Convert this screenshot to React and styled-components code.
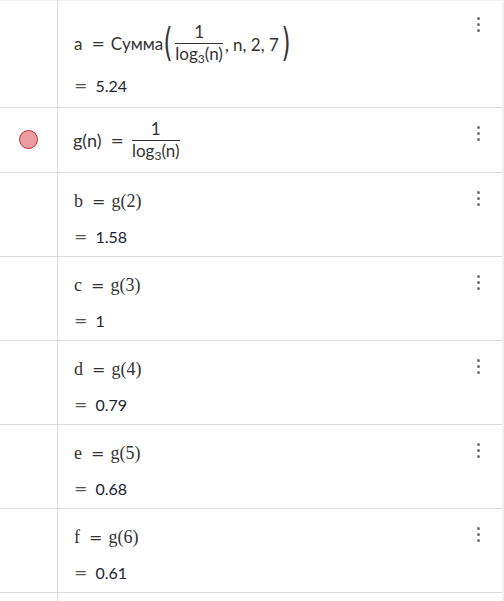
import React from "react";
import styled, { createGlobalStyle } from "styled-components";

const Global = createGlobalStyle`
  body {
    margin: 0;
    background: #fff;
    font-family: "Lato", "Noto Sans", sans-serif;
    color: #333;
  }
`;

const Panel = styled.div`
  width: 502px;
  min-height: 601px;
  border-right: 2px solid #f1f1f1;
  box-shadow: inset 0 1px 1px rgba(0, 0, 0, 0.06);
  overflow: hidden;
`;

const Row = styled.div`
  display: grid;
  grid-template-columns: 57px 1fr;
  height: ${(p) => p.h}px;
  border-bottom: 1px solid #dcdcdc;
`;

const Marker = styled.div`
  display: flex;
  align-items: center;
  justify-content: center;
`;

const Dot = styled.span`
  width: 19px;
  height: 19px;
  border-radius: 50%;
  background: #eb9c9e;
  border: 1px solid #d0252b;
  box-sizing: border-box;
  margin-top: -1px;
`;

const Content = styled.div`
  position: relative;
  border-left: 1px solid #dcdcdc;
  padding: ${(p) => p.pad || "0 0 0 16px"};
  display: flex;
  flex-direction: column;
  justify-content: ${(p) => (p.center ? "center" : "flex-start")};
  gap: ${(p) => p.gap || 0}px;
`;

const Line = styled.div`
  display: flex;
  align-items: center;
  height: ${(p) => p.h || 20}px;
  font-family: ${(p) =>
    p.serif ? '"Liberation Serif", "Times New Roman", serif' : '"Lato", "Noto Sans", sans-serif'};
  font-size: ${(p) => p.size || 18}px;
  color: #333;
  white-space: nowrap;
`;

const Eq = styled.span`
  margin: 0 6px 0 9px;
  font-family: "DejaVu Sans", sans-serif;
  font-size: 16px;
  color: ${(p) => (p.muted ? "#555" : "#333")};
`;

const OutEq = styled(Eq)`
  margin: 0 8px 0 0;
`;

const Value = styled.span`
  font-family: "Lato", sans-serif;
  font-size: 16px;
  color: #1d2233;
`;

const Frac = styled.span`
  display: inline-flex;
  flex-direction: column;
  align-items: center;
  margin: 0 2px;
  font-size: 17px;
  line-height: 18px;
`;

const Bar = styled.span`
  align-self: stretch;
  height: 1px;
  background: #333;
  margin: 2px 0 1px;
`;

const Sub = styled.sub`
  font-size: 12px;
  vertical-align: -3px;
  line-height: 0;
`;

const Paren = styled.span`
  display: inline-block;
  font-family: "DejaVu Sans", sans-serif;
  font-size: 21px;
  transform: scale(1.1, 1.9);
  margin: 0 ${(p) => (p.close ? 0 : 1)}px 0 ${(p) => (p.close ? 3 : 1)}px;
  color: #333;
`;

const Args = styled.span`
  margin-top: 3px;
`;

const Menu = styled.div`
  position: absolute;
  top: ${(p) => p.top || 18}px;
  right: 22px;
  display: flex;
  flex-direction: column;
  gap: 3px;
`;

const MenuDot = styled.span`
  width: 3px;
  height: 3px;
  border-radius: 50%;
  background: #6f6f6f;
`;

const Kebab = ({ top }) => (
  <Menu top={top}>
    <MenuDot />
    <MenuDot />
    <MenuDot />
  </Menu>
);

const LogFrac = () => (
  <Frac>
    <span>1</span>
    <Bar />
    <span>
      log<Sub>3</Sub>(n)
    </span>
  </Frac>
);

const values = [
  ["b", "2", "1.58"],
  ["c", "3", "1"],
  ["d", "4", "0.79"],
  ["e", "5", "0.68"],
  ["f", "6", "0.61"],
];

export default function App() {
  return (
    <>
      <Global />
      <Panel>
        <Row h={107}>
          <Marker />
          <Content pad="22px 0 0 16px" gap={11}>
            <Line h={42} size={17}>
              <span>a</span>
              <Eq>=</Eq>
              <span>Сумма</span>
              <Paren>(</Paren>
              <LogFrac />
              <Args>, n, 2, 7</Args>
              <Paren close>)</Paren>
            </Line>
            <Line>
              <OutEq muted>=</OutEq>
              <Value>5.24</Value>
            </Line>
            <Kebab top={17} />
          </Content>
        </Row>
        <Row h={64}>
          <Marker>
            <Dot />
          </Marker>
          <Content pad="0 0 0 15px" center>
            <Line h={42}>
              <span>g(n)</span>
              <Eq>=</Eq>
              <LogFrac />
            </Line>
            <Kebab top={18} />
          </Content>
        </Row>
        {values.map(([name, arg, val]) => (
          <Row h={83} key={name}>
            <Marker />
            <Content pad="18px 0 0 16px" gap={15}>
              <Line serif>
                <span>{name}</span>
                <Eq>=</Eq>
                <span>g({arg})</span>
              </Line>
              <Line>
                <OutEq muted>=</OutEq>
                <Value>{val}</Value>
              </Line>
              <Kebab top={18} />
            </Content>
          </Row>
        ))}
        <Row h={20}>
          <Marker />
          <Content />
        </Row>
      </Panel>
    </>
  );
}
